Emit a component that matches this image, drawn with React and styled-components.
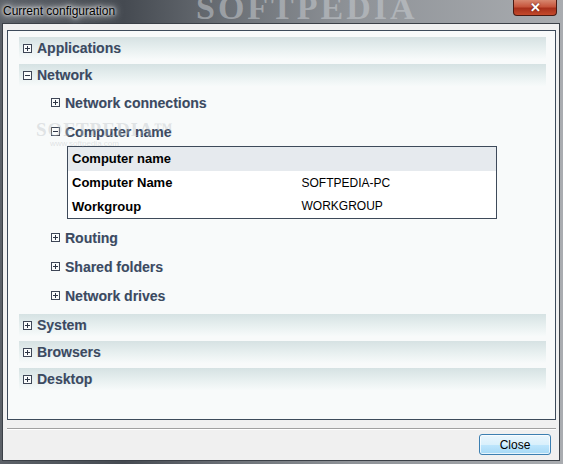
import React from "react";
import styled, { createGlobalStyle } from "styled-components";

const GlobalStyle = createGlobalStyle`
  html, body { margin: 0; padding: 0; background: #9a9ea3; }
  * { box-sizing: border-box; }
`;

const Window = styled.div`
  width: 563px;
  height: 464px;
  display: flex;
  flex-direction: column;
  background: linear-gradient(90deg, #5c6168 0%, #454a51 22%, #6a6f75 40%, #8e9297 62%, #a9acb0 100%);
  font-family: "Liberation Sans", Arial, sans-serif;
  overflow: hidden;
`;

const TitleBar = styled.div`
  position: relative;
  height: 23px;
  flex: none;
  display: flex;
  justify-content: space-between;
  align-items: flex-start;
`;

const Title = styled.div`
  position: relative;
  z-index: 1;
  padding: 4px 0 0 3px;
  font-size: 12px;
  color: #000;
  text-shadow: 0 0 6px #fff, 0 0 10px #fff, 0 0 3px #fff;
`;

const TitleMark = styled.div`
  position: absolute;
  left: 196px;
  top: -11px;
  font-family: "Liberation Serif", "Times New Roman", serif;
  font-weight: bold;
  font-size: 34px;
  letter-spacing: 3px;
  color: rgba(205, 209, 213, 0.5);
  pointer-events: none;
`;

const CloseX = styled.div`
  position: relative;
  z-index: 1;
  width: 44px;
  height: 16px;
  margin-right: 6px;
  border: 1px solid #4a1a12;
  border-top: none;
  border-radius: 0 0 4px 4px;
  background: linear-gradient(180deg, #d7876f 0%, #c6553c 45%, #a7301b 55%, #c44a2c 100%);
  display: flex;
  align-items: center;
  justify-content: center;
  color: #fff;
  font-weight: bold;
  font-size: 13px;
  line-height: 1;
  text-shadow: 0 0 2px #5a1a10;
`;

const Client = styled.div`
  flex: 1;
  margin: 0 3px 3px 2px;
  border: 1px solid #3b4047;
  background: #f0f0f0;
  padding: 6px 3px 0 4px;
  display: flex;
  flex-direction: column;
`;

const Panel = styled.div`
  position: relative;
  height: 390px;
  border: 1px solid #3d4a5a;
  background: #f8fafa;
  padding: 6px 9px 0 11px;
  display: flex;
  flex-direction: column;
`;

const Group = styled.div`
  display: flex;
  flex-direction: column;
  margin-bottom: 5px;
`;

const CategoryRow = styled.div`
  height: 22px;
  padding-left: 4px;
  display: flex;
  align-items: center;
  gap: 5px;
  background: linear-gradient(180deg, #d6e2e3 0%, #e8f0f0 55%, #f7fafa 100%);
`;

const Label = styled.span`
  font-weight: bold;
  font-size: 14px;
  color: #3d4a5e;
  text-shadow: 0.5px 0 0 rgba(90, 140, 200, 0.35);
  line-height: 1;
`;

const Children = styled.div`
  display: flex;
  flex-direction: column;
  gap: 4px;
  padding: 4px 0 1px 32px;
`;

const SubRow = styled.div`
  height: 25px;
  display: flex;
  align-items: center;
  gap: 5px;
`;

const DetailTable = styled.table`
  width: 430px;
  margin: -2px 0 2px 16px;
  border: 1px solid #3e4a5a;
  border-collapse: collapse;
  background: #fff;
  font-size: 13px;
  color: #000;

  td {
    height: 24px;
    padding: 0 0 0 4px;
    white-space: nowrap;
  }
`;

const HeadRow = styled.tr`
  background: #e6eaee;
  td { font-weight: bold; }
`;

const KeyCell = styled.td`
  width: 230px;
  font-weight: bold;
`;

const ValueCell = styled.td`
  font-size: 12px;
`;

const Watermark = styled.div`
  position: absolute;
  left: 28px;
  top: 88px;
  pointer-events: none;
  color: rgba(185, 190, 194, 0.4);
  font-family: "Liberation Serif", serif;
  font-weight: bold;
  font-size: 19px;
  letter-spacing: 1px;

  small {
    display: block;
    margin-top: -2px;
    font-family: "Liberation Sans", sans-serif;
    font-weight: normal;
    font-size: 8px;
    letter-spacing: 0;
    padding-left: 14px;
  }
`;

const Footer = styled.div`
  display: flex;
  flex-direction: column;
  margin-top: 8px;
`;

const Separator = styled.div`
  height: 2px;
  border-top: 1px solid #a0a0a0;
  border-bottom: 1px solid #fff;
`;

const ButtonBar = styled.div`
  display: flex;
  justify-content: flex-end;
  padding: 4px 5px 0 0;
`;

const Button = styled.button`
  width: 72px;
  height: 21px;
  border: 1px solid #3c7fb1;
  border-radius: 3px;
  background: linear-gradient(180deg, #eaf6fd 0%, #d9f0fc 50%, #bee6fd 51%, #a7d9f5 100%);
  box-shadow: inset 0 0 0 1px rgba(255, 255, 255, 0.7);
  font-family: "Liberation Sans", Arial, sans-serif;
  font-size: 12px;
  color: #000;
  padding: 0;
`;

const Toggle = ({ open }) => (
  <svg width="9" height="9" viewBox="0 0 9 9" style={{ flex: "none" }}>
    <rect x="0.5" y="0.5" width="8" height="8" fill="#fafcfc" stroke="#3e4656" />
    <line x1="2" y1="4.5" x2="7" y2="4.5" stroke="#2e3646" />
    {!open && <line x1="4.5" y1="2" x2="4.5" y2="7" stroke="#2e3646" />}
  </svg>
);

const Category = ({ label, open, children }) => (
  <Group>
    <CategoryRow>
      <Toggle open={open} />
      <Label>{label}</Label>
    </CategoryRow>
    {open && <Children>{children}</Children>}
  </Group>
);

const SubItem = ({ label, open }) => (
  <SubRow>
    <Toggle open={open} />
    <Label>{label}</Label>
  </SubRow>
);

export default function App() {
  return (
    <>
      <GlobalStyle />
      <Window>
        <TitleBar>
          <Title>Current configuration</Title>
          <TitleMark>SOFTPEDIA</TitleMark>
          <CloseX>✕</CloseX>
        </TitleBar>
        <Client>
          <Panel>
            <Category label="Applications" />
            <Category label="Network" open>
              <SubItem label="Network connections" />
              <SubItem label="Computer name" open />
              <DetailTable>
                <tbody>
                  <HeadRow>
                    <td colSpan={2}>Computer name</td>
                  </HeadRow>
                  <tr>
                    <KeyCell>Computer Name</KeyCell>
                    <ValueCell>SOFTPEDIA-PC</ValueCell>
                  </tr>
                  <tr>
                    <KeyCell>Workgroup</KeyCell>
                    <ValueCell>WORKGROUP</ValueCell>
                  </tr>
                </tbody>
              </DetailTable>
              <SubItem label="Routing" />
              <SubItem label="Shared folders" />
              <SubItem label="Network drives" />
            </Category>
            <Category label="System" />
            <Category label="Browsers" />
            <Category label="Desktop" />
            <Watermark>
              SOFTPEDIA™
              <small>www.softpedia.com</small>
            </Watermark>
          </Panel>
          <Footer>
            <Separator />
            <ButtonBar>
              <Button>Close</Button>
            </ButtonBar>
          </Footer>
        </Client>
      </Window>
    </>
  );
}
